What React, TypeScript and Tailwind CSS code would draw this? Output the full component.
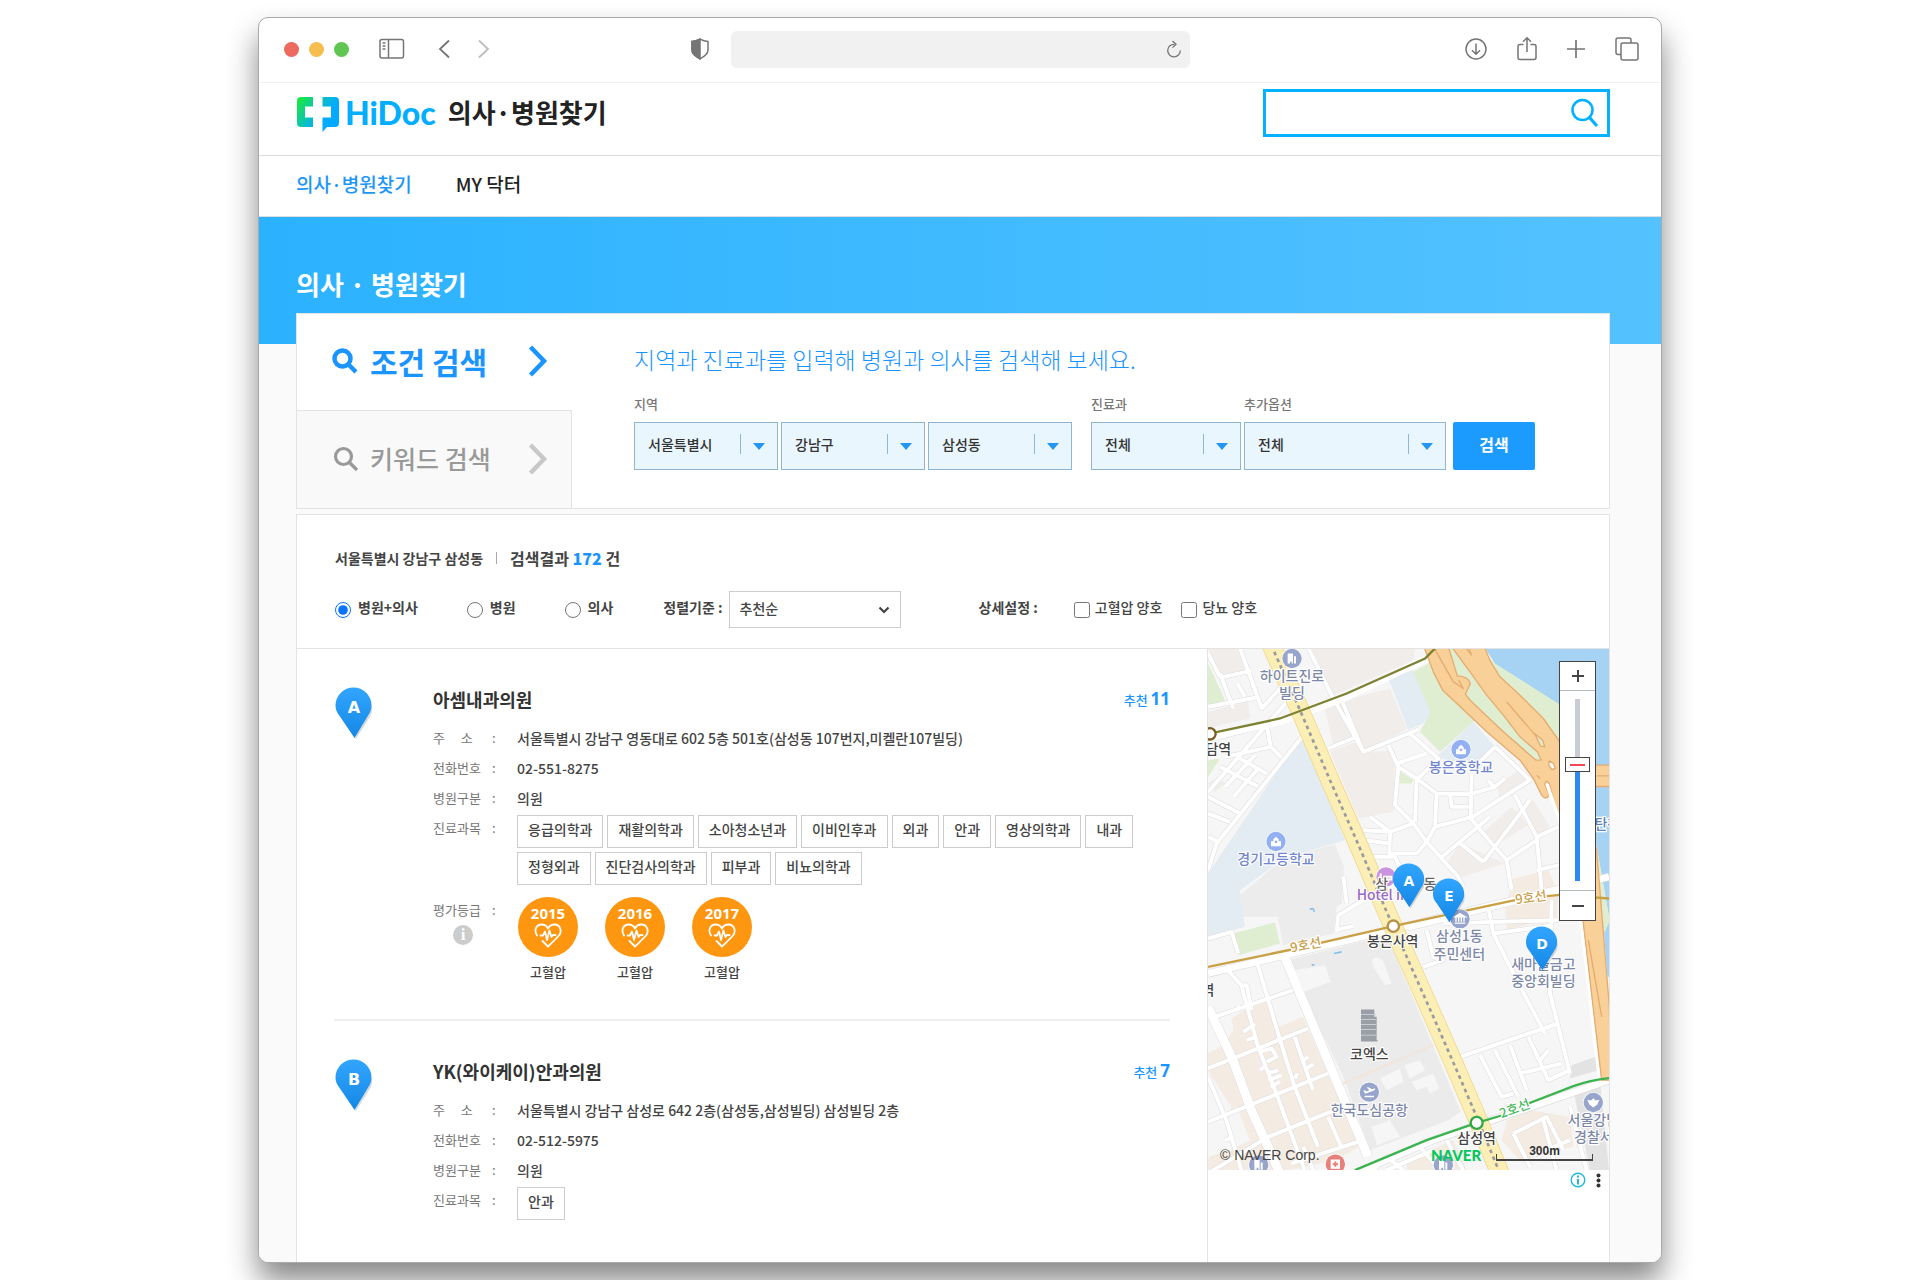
import type { ReactNode } from 'react';

type Hospital = {
  mark: string;
  name: string;
  likes: number;
  address: string;
  phone: string;
  kind: string;
  subjects: string[];
  grades: { year: string; label: string }[];
};

const hospitals: Hospital[] = [
  {
    mark: 'A',
    name: '아셈내과의원',
    likes: 11,
    address: '서울특별시 강남구 영동대로 602 5층 501호(삼성동 107번지,미켈란107빌딩)',
    phone: '02-551-8275',
    kind: '의원',
    subjects: [
      '응급의학과', '재활의학과', '소아청소년과', '이비인후과', '외과', '안과', '영상의학과', '내과',
      '정형외과', '진단검사의학과', '피부과', '비뇨의학과',
    ],
    grades: [
      { year: '2015', label: '고혈압' },
      { year: '2016', label: '고혈압' },
      { year: '2017', label: '고혈압' },
    ],
  },
  {
    mark: 'B',
    name: 'YK(와이케이)안과의원',
    likes: 7,
    address: '서울특별시 강남구 삼성로 642 2층(삼성동,삼성빌딩) 삼성빌딩 2층',
    phone: '02-512-5975',
    kind: '의원',
    subjects: ['안과'],
    grades: [],
  },
];

function Pin({ mark, className }: { mark: string; className: string }) {
  return (
    <svg viewBox="0 0 38 53" className={className}>
      <defs>
        <linearGradient id={`pin-${mark}`} x1="0" y1="0" x2="0" y2="1">
          <stop offset="0" stopColor="#31a5ff" />
          <stop offset="1" stopColor="#1488e4" />
        </linearGradient>
      </defs>
      <path d="M21 52 L36 28 A18 18 0 0 0 37 20 L33 12 L20 52Z" fill="#000" opacity=".15" />
      <path d="M18.500 .500 A18 18 0 0 1 36.500 18.500 C36.500 22.500 35 26 32.500 29.500 L19.500 51 L5 29.500 C2 26 .500 22.500 .500 18.500 A18 18 0 0 1 18.500 .500Z" fill={`url(#pin-${mark})`} />
      <text x="19" y="26" textAnchor="middle" fill="#fff" fontSize="16" fontWeight="700" fontFamily="DejaVu Sans, sans-serif">{mark}</text>
    </svg>
  );
}

function BrowserBar() {
  return (
    <div className="flex h-[65px] shrink-0 items-center border-b border-[#f2f2f2] pr-[21px] pb-[2px] pl-[25px] text-[#757575]">
      <div className="flex gap-[10px]">
        <span className="h-[15px] w-[15px] rounded-full bg-[#ed6a5e]" />
        <span className="h-[15px] w-[15px] rounded-full bg-[#f5bf4f]" />
        <span className="h-[15px] w-[15px] rounded-full bg-[#61c554]" />
      </div>
      <button aria-label="sidebar" className="ml-[30px]">
        <svg width="26" height="22" viewBox="0 0 26 22" fill="none" stroke="currentColor" strokeWidth="1.500">
          <rect x="1" y="1.500" width="23.500" height="18.500" rx="2" />
          <path d="M9.500 1.500v18.500M3.500 5h3M3.500 8h3M3.500 11h3" />
        </svg>
      </button>
      <button aria-label="back" className="ml-[33px]">
        <svg width="12" height="20" viewBox="0 0 12 20" fill="none" stroke="currentColor" strokeWidth="1.800">
          <path d="M11 1.500 L2 10 L11 18.500" />
        </svg>
      </button>
      <button aria-label="forward" className="ml-[28px] text-[#bdbdbd]">
        <svg width="12" height="20" viewBox="0 0 12 20" fill="none" stroke="currentColor" strokeWidth="1.800">
          <path d="M1 1.500 L10 10 L1 18.500" />
        </svg>
      </button>
      <div className="flex flex-1 items-center justify-center pl-[6px]">
        <svg width="18" height="22" viewBox="0 0 18 22" fill="none" stroke="currentColor" strokeWidth="1.500">
          <path d="M9 1.200 C6.500 2.500 4 3.300 1 3.500 V12 C1 16 4.500 18.500 9 20.800 C13.500 18.500 17 16 17 12 V3.500 C14 3.300 11.500 2.500 9 1.200Z" />
          <path d="M9 1.200 C6.500 2.500 4 3.300 1 3.500 V12 C1 16 4.500 18.500 9 20.800Z" fill="currentColor" />
        </svg>
        <div className="ml-[22px] flex h-[37px] w-[459px] items-center rounded-md bg-[#f1f1f1] pr-2">
          <input aria-label="address" className="h-full min-w-0 flex-1 bg-transparent px-3 outline-none" />
          <button aria-label="reload">
            <svg width="16" height="18" viewBox="0 0 16 18" fill="none" stroke="currentColor" strokeWidth="1.300">
              <path d="M8.500 4.300 A6.300 6.300 0 1 0 14.300 10.500" />
              <path d="M6.500 1 L10 4.300 L6.500 7.600" />
            </svg>
          </button>
        </div>
      </div>
      <div className="ml-[80px] flex items-center gap-[28px]">
        <button aria-label="downloads">
          <svg width="24" height="24" viewBox="0 0 24 24" fill="none" stroke="currentColor" strokeWidth="1.500">
            <circle cx="12" cy="12" r="10" />
            <path d="M12 6.500v10.500M8 13.200l4 4 4-4" />
          </svg>
        </button>
        <button aria-label="share">
          <svg width="22" height="26" viewBox="0 0 22 26" fill="none" stroke="currentColor" strokeWidth="1.500">
            <path d="M7.500 8.500H4a2 2 0 0 0-2 2v11a2 2 0 0 0 2 2h14a2 2 0 0 0 2-2v-11a2 2 0 0 0-2-2h-3.500M11 16V2M7 5.700l4-4 4 4" />
          </svg>
        </button>
        <button aria-label="new tab">
          <svg width="20" height="20" viewBox="0 0 20 20" stroke="currentColor" strokeWidth="1.700">
            <path d="M10 1v18M1 10h18" />
          </svg>
        </button>
        <button aria-label="tabs">
          <svg width="26" height="26" viewBox="0 0 26 26" fill="none" stroke="currentColor" strokeWidth="1.500">
            <path d="M7 18.500H4a2 2 0 0 1-2-2V4a2 2 0 0 1 2-2h11a2 2 0 0 1 2 2v3" />
            <rect x="7" y="7" width="17" height="17" rx="2" />
          </svg>
        </button>
      </div>
    </div>
  );
}

function SiteHeader() {
  return (
    <>
      <header className="flex h-[73px] shrink-0 items-start justify-between border-b border-[#dedede] pl-[37px] pr-[51px]">
        <a href="#" className="flex items-start pt-[8px]">
          <svg width="44" height="37" viewBox="0 0 44 37" className="mt-[5px]">
            <defs>
              <linearGradient id="logo" x1="0" y1="0" x2="1" y2=".6">
                <stop offset="0" stopColor="#1bee2c" />
                <stop offset=".55" stopColor="#08b9d6" />
                <stop offset=".8" stopColor="#00aaff" />
              </linearGradient>
            </defs>
            <path d="M5 1H17V10.500H9V21.500H17V31H5A4 4 0 0 1 1 27V5A4 4 0 0 1 5 1Z M26.500 1H39A4 4 0 0 1 43 5V27A4 4 0 0 1 39 31H31L26.500 36V21.500H35V10.500H26.500Z" fill="url(#logo)" />
          </svg>
          <span className="ml-[5px] font-['Lato',sans-serif] text-[32px] leading-[44px] font-black text-[#03aeff]">HiDoc</span>
          <span className="ml-[12px] text-[26px] leading-[42px] font-bold text-[#222]">의사·병원찾기</span>
        </a>
        <form className="mt-[6px] flex h-[48px] w-[347px] items-center border-3 border-[#03b1ff] pr-[8px]">
          <input aria-label="검색어" className="h-full min-w-0 flex-1 px-3 outline-none" />
          <button type="button" aria-label="검색">
            <svg width="30" height="30" viewBox="0 0 30 30" fill="none" stroke="#03b1ff" strokeWidth="2.600">
              <circle cx="13.500" cy="12" r="10" />
              <path d="M20.500 19.500 L28 28" strokeWidth="3.200" />
            </svg>
          </button>
        </form>
      </header>
      <nav className="flex h-[61px] shrink-0 items-center gap-[44px] border-b border-[#dedede] pb-[3px] pl-[37px] text-[19px] font-medium">
        <a href="#" className="text-[#2196f9]">의사·병원찾기</a>
        <a href="#" className="text-[#222]">MY 닥터</a>
      </nav>
    </>
  );
}

function SearchGlyph({ width }: { width: string }) {
  return (
    <svg width="26" height="26" viewBox="0 0 26 26" fill="none" stroke="currentColor" strokeWidth={width}>
      <circle cx="10.500" cy="10.500" r="8" />
      <path d="M16.500 16.500 L24 24" />
    </svg>
  );
}

function TabArrow() {
  return (
    <svg width="20" height="32" viewBox="0 0 20 32" fill="none" stroke="currentColor" strokeWidth="4.500" className="ml-auto">
      <path d="M2.500 2 L16 16 L2.500 30" />
    </svg>
  );
}

function BlueSelect({ id, value, className, label }: { id: string; value: string; className: string; label?: string }) {
  return (
    <div className={className}>
      <label htmlFor={id} className="mb-[10px] block h-4 text-[13px] leading-4 font-medium text-[#777]">{label}</label>
      <div className="relative h-12">
        <select id={id} className="h-12 w-full appearance-none border border-[#8fb5cf] bg-[#e9f6fe] pl-[13px] pb-[4px] text-[14px] font-medium text-[#333]">
          <option>{value}</option>
        </select>
        <span className="pointer-events-none absolute top-3 right-[37px] h-5 w-px bg-[#8fb8d8]" />
        <svg width="12" height="7" viewBox="0 0 12 7" className="pointer-events-none absolute top-[21px] right-[13px]">
          <path d="M0 0H12L6 7Z" fill="#2196f3" />
        </svg>
      </div>
    </div>
  );
}

function ConditionPanel() {
  return (
    <section className="flex border border-[#e3e3e3] bg-white">
      <div className="w-[275px] shrink-0">
        <button className="flex h-24 w-full items-center pr-[24px] pb-[2px] pl-[35px] text-[#1a95ff]">
          <SearchGlyph width="4.500" />
          <span className="ml-[12px] text-[30px] font-bold">조건 검색</span>
          <TabArrow />
        </button>
        <button className="flex h-[98px] w-full items-center border-t border-r border-[#e3e3e3] bg-[#f9f9f9] pr-[23px] pb-[2px] pl-[36px] text-[#999]">
          <SearchGlyph width="3.200" />
          <span className="ml-[11px] text-[25px] font-medium">키워드 검색</span>
          <span className="ml-auto text-[#c8c8c8]"><TabArrow /></span>
        </button>
      </div>
      <div className="min-w-0 flex-1 pt-[29px] pl-[62px]">
        <h2 className="mb-[21px] text-[23px] leading-8 font-light text-[#1a95ff]">지역과 진료과를 입력해 병원과 의사를 검색해 보세요.</h2>
        <div className="flex items-end gap-[3px]">
          <BlueSelect id="city" label="지역" value="서울특별시" className="w-36" />
          <BlueSelect id="district" value="강남구" className="w-36" />
          <BlueSelect id="town" value="삼성동" className="w-36" />
          <BlueSelect id="subject" label="진료과" value="전체" className="ml-[16px] w-[150px]" />
          <BlueSelect id="option" label="추가옵션" value="전체" className="w-[202px]" />
          <button className="ml-[4px] h-12 w-[82px] rounded-xs bg-[#1c9bff] pb-[4px] text-[16px] font-bold text-white">검색</button>
        </div>
      </div>
    </section>
  );
}

function Choice({ type, id, checked, children }: { type: 'radio' | 'checkbox'; id: string; checked?: boolean; children: ReactNode }) {
  return (
    <span className="flex items-center">
      <input type={type} id={id} name={type === 'radio' ? 'target' : id} defaultChecked={checked} className="h-4 w-4 accent-[#0a74ff]" />
      <label htmlFor={id} className={type === 'radio' ? 'pb-[4px] pl-[7px] font-bold' : 'pb-[4px] pl-[5px] font-medium'}>{children}</label>
    </span>
  );
}

function FilterBar() {
  return (
    <div className="border-b border-[#e3e3e3] pt-[29px] pb-[20px] pl-[38px] text-[14px] text-[#444]">
      <p className="flex h-7 items-center font-bold">
        서울특별시 강남구 삼성동
        <span className="mx-[13px] h-[12px] w-px bg-[#aaa]" />
        <span className="text-[16px]">검색결과 <b className="text-[#1a95ff]">172</b> 건</span>
      </p>
      <form className="mt-[19px] flex h-[37px] items-center">
        <Choice type="radio" id="both" checked>병원+의사</Choice>
        <span className="w-[49px]" />
        <Choice type="radio" id="clinic">병원</Choice>
        <span className="w-[49px]" />
        <Choice type="radio" id="doctor">의사</Choice>
        <label htmlFor="sort" className="ml-[50px] pb-[4px] font-bold">정렬기준 :</label>
        <div className="relative ml-[6px]">
          <select id="sort" className="h-[37px] w-[172px] appearance-none border border-[#ccc] bg-white pb-[2px] pl-[10px] font-medium">
            <option>추천순</option>
          </select>
          <svg width="12" height="8" viewBox="0 0 12 8" fill="none" stroke="#444" strokeWidth="2.200" className="pointer-events-none absolute top-[15px] right-[11px]">
            <path d="M1.500 1.500 L6 6 L10.500 1.500" />
          </svg>
        </div>
        <span className="ml-[78px] mr-[36px] pb-[4px] font-bold">상세설정 :</span>
        <Choice type="checkbox" id="pressure">고혈압 양호</Choice>
        <span className="w-[19px]" />
        <Choice type="checkbox" id="sugar">당뇨 양호</Choice>
      </form>
    </div>
  );
}

function Row({ name, children }: { name: string; children: ReactNode }) {
  return (
    <div className="flex items-start leading-[30px]">
      <dt className="flex w-[84px] shrink-0 text-[13px] text-[#777]">
        <span className="w-[59px] whitespace-pre">{name}</span>:
      </dt>
      <dd className="min-w-0 flex-1 text-[14px] font-medium text-[#444]">{children}</dd>
    </div>
  );
}

function HeartBeat() {
  return (
    <svg width="28" height="25" viewBox="0 0 28 25" fill="none" stroke="#fff" strokeWidth="1.800" strokeLinejoin="round" strokeLinecap="round">
      <path d="M3 12.500 C-.5 7 2.500 1.500 7.500 1.500 C10.500 1.500 12.800 3 14 5.500 C15.200 3 17.500 1.500 20.500 1.500 C26 1.500 28.500 8 25 12.500 C22 16 18 19.500 14 23.500 L8.500 18" />
      <path d="M6.500 12.500H9L11 8.500L13 17L15.500 7.500L17.500 14L19 12H21.500" />
    </svg>
  );
}

function HospitalItem({ item }: { item: Hospital }) {
  return (
    <article className="flex items-start border-b-2 border-[#eee] pt-[38px] pb-[37px] last:border-b-0">
      <div className="w-[99px] shrink-0 pl-px">
        <Pin mark={item.mark} className="h-[53px] w-[38px]" />
      </div>
      <div className="min-w-0 flex-1">
        <div className="mb-3 flex h-6 items-center justify-between">
          <h3 className="text-[18px] font-bold text-[#333]">{item.name}</h3>
          <p className="text-[13px] font-medium text-[#1a95ff]">
            추천 <b className="font-['Noto_Sans',sans-serif] text-[17px] leading-5">{item.likes}</b>
          </p>
        </div>
        <dl>
          <Row name={'주\u2003 소'}>{item.address}</Row>
          <Row name="전화번호">{item.phone}</Row>
          <Row name="병원구분">{item.kind}</Row>
          <Row name="진료과목">
            <ul className="flex flex-wrap gap-1 pt-[2px] pr-[30px]">
              {item.subjects.map((s) => (
                <li key={s} className="h-[33px] border border-[#ccc] px-[10px] leading-[27px]">{s}</li>
              ))}
            </ul>
          </Row>
          {item.grades.length > 0 && (
            <div className="flex pt-[10px]">
              <dt className="w-[84px] shrink-0 text-[13px] leading-[30px] text-[#777]">
                <span className="flex"><span className="w-[59px]">평가등급</span>:</span>
                <button aria-label="info" className="ml-[20px] block h-5 w-5 rounded-full bg-[#ccc] text-center font-['Liberation_Serif',serif] text-[17px] leading-5 font-bold text-white">i</button>
              </dt>
              <dd className="flex gap-[27px] pt-[2px] pl-px">
                {item.grades.map((g) => (
                  <div key={g.year} className="w-[60px] text-center">
                    <div className="flex h-[60px] flex-col items-center rounded-full bg-[#ff960f] pt-[6px]">
                      <span className="font-['Noto_Sans',sans-serif] text-[15px] leading-5 font-bold text-white">{g.year}</span>
                      <HeartBeat />
                    </div>
                    <p className="mt-[5px] text-[13px] leading-5 font-medium text-[#444]">{g.label}</p>
                  </div>
                ))}
              </dd>
            </div>
          )}
        </dl>
      </div>
    </article>
  );
}

// local streets, one path per neighbourhood
const streets = [
  'M24 200 L170 172 M60 100 L100 205 M70 110 L155 92 M120 24 L185 205 L240 145 M24 40 L60 110 M112 130 L135 170 M24 455 L300 140',
  'M24 300 L200 255 L290 225 M200 255 L212 320 L75 350 M212 320 L245 352 M325 24 L395 165 L490 335 L655 268 M385 325 L465 292 M425 180 L490 335',
  'M24 690 L50 610 L310 285 M24 520 L90 545 M60 380 L175 440 M110 350 L200 400 M24 470 L120 520 M100 470 L175 385 M75 440 L165 345 M24 590 L55 605',
  'M565 315 L595 380 L585 495 L640 550 L680 605 L775 710 L790 740 M595 380 L650 415 L710 460 L810 462 L885 440 L915 415 M590 370 L680 340 M630 280 L715 355 L655 415',
  'M650 415 L645 545 M710 460 L705 560 L680 605 M705 560 L810 532 L875 610 L920 660 L935 750 M750 460 L755 500 L812 500 M815 400 L812 530 M885 320 L990 420 L810 535',
  'M885 320 L820 385 M865 420 L885 445 M945 465 L1010 590 L1025 750 M1010 590 L1076 560 M775 605 L850 665 M720 655 L870 530 M850 665 L990 480 M920 660 L1010 600',
  'M510 530 L570 575 L635 552 M490 570 L570 575 L568 640 L650 640 L680 605 M495 600 L568 610 M520 650 L585 650 L640 770 M1010 690 L1078 675',
  'M410 875 L415 825 L490 780 M430 710 L440 790 M405 870 L460 858 M24 895 L95 875 L115 940 M625 865 L1075 755 M730 850 L1075 840 M865 800 L880 880 L1060 855',
  'M880 880 L940 1000 L1035 1180 M1055 780 L1050 1060 L1110 1300 M780 1250 L1075 1150 M840 1245 L905 1370 L940 1360 M885 1230 L955 1370 M930 1215 L980 1350 M985 1190 L1045 1320 L1110 1290',
  'M960 1300 L1085 1270 M1045 1230 L1020 1260 M680 870 L700 950 L730 960 L670 980',
  'M44 1130 L279 1050 M24 1285 L324 1165 M24 1445 L384 1300 M24 1600 L204 1490 L404 1410 M74 980 L124 1035 L174 1220 L229 1360 L314 1590',
  'M114 1095 L116 1110 M120 1035 H140 L155 1110 M169 960 L239 1195 L284 1340 L354 1520 M284 1190 L339 1350 M384 1430 L424 1520 M474 1505 L274 1570 M24 1310 L79 1440 L124 1590',
  'M130 1175 L165 1152 M140 1200 L168 1190 M180 1290 L200 1275 M310 1260 L325 1250 M320 1285 L340 1272 M285 1315 L292 1300',
  'M180 1235 L215 1225 L230 1250 L200 1265 M200 1300 L235 1290 M205 1320 L245 1305 M212 1340 L240 1325 M310 1520 L340 1590 M75 1500 L100 1490',
  'M940 1480 L1040 1430 L1090 1530 M940 1480 L990 1580 M1030 1440 L1070 1590 M1110 1400 L1160 1590 M560 1590 L700 1530 M740 1500 L790 1590 M1000 1545 L1110 1500 M520 1590 L560 1550 L610 1590 M660 1520 L720 1590',
];

const avenue = 'M214 15L300 210L390 420L480 625L560 815L620 950L700 1130L770 1290L830 1430L900 1600';

function MapIcon({ x, y, fill, children }: { x: number; y: number; fill: string; children: ReactNode }) {
  return (
    <g transform={`translate(${x} ${y})`}>
      <circle r="31" fill="#fff" />
      <circle r="29" fill={fill} />
      {children}
    </g>
  );
}

const school = <path d="M-15 14V-1H-8V-7L0 -14L8 -7V-1H15V14Z M0 -3A4 4 0 1 0 .1 -3Z" fill="#fff" fillRule="evenodd" />;
const office = <path d="M-13 15V-15H3V15H-1V9H-6V15Z M6 -7H12V15H6Z" fill="#fff" />;

function MapCanvas() {
  return (
    <svg viewBox="24 25 1203 1566" preserveAspectRatio="xMidYMid slice" className="absolute inset-0 h-full w-full font-['Noto_Sans_CJK_KR',sans-serif]">
      <rect x="24" y="25" width="1203" height="1566" fill="#f6f6f6" />
      {/* blocks */}
      <g fill="#f1edea">
        <path d="M24 24H115L135 95L65 110Z M24 215L145 185L150 235L60 255L24 265Z M335 24H645L640 60L400 165Z M375 210L420 180L465 290L400 315Z M430 180L570 145L622 268L490 330Z" />
        <path d="M390 335L480 300L510 335L585 330L580 515L475 535Z M890 430L960 390L985 425L900 485Z M840 585L935 500L985 555L885 615Z M970 500L1000 480L1050 560L1010 585Z M780 610L850 640L915 670L770 715L740 670Z M24 430L55 410L75 430L45 455Z" />
      </g>
      <path d="M940 715L1045 690L1075 760L1070 830L920 870L915 800Z M94 1135L144 1105L209 1080L239 1160L309 1130L479 1520L404 1560L224 1600H154L24 1590V1560L94 1400L24 1290V1240L70 1215L100 1170Z M920 1440L990 1410L1110 1430L1120 1520L960 1560L905 1500Z M620 1560L760 1500L800 1590H620Z" fill="#f4ebe2" />
      <path d="M24 1400L80 1440L110 1400L150 1500L90 1530L24 1550Z" fill="#f6f6f6" />
      <path d="M24 700L305 285L435 600L250 655L120 750L135 860L24 890Z M565 115L640 90L695 215L670 250L625 268Z M710 350L820 245L885 320L830 370L760 365Z" fill="#e3ebf3" />
      <path d="M120 765L250 655L405 612L432 680L425 790L410 800L400 880L250 915L232 830H130Z" fill="#ececec" />
      <path d="M262 960L560 885L782 1415L745 1440L510 1530L430 1310Z" fill="#ebebeb" />
      <path d="M1115 1275L1190 1248L1195 1290L1110 1315Z M1120 1350L1200 1320L1227 1590H1170Z" fill="#e3e3e3" />
      <path d="M24 70L75 180L24 195Z M640 95L720 50L770 160L825 240L720 335L660 275L692 215Z M600 395L640 420L635 430H600Z M24 360L60 355L24 410Z M100 880L225 847L240 910L115 945Z M860 50L1080 190V330L960 200Z" fill="#dfedd0" />
      <path d="M855 24H1227V830L1190 620L1078 300V192L885 70Z" fill="#a6d3f3" />
      <path d="M1190 620L1227 830V900L1200 860Z" fill="#dfedd0" />

      {/* grey rims first, white on top */}
      {streets.map((d) => <path key={d} d={d} fill="none" stroke="#dcdcdc" strokeWidth="15" strokeLinejoin="round" />)}
      <g fill="none" stroke="#dcdcdc" strokeWidth="30">
        <path d="M24 1100L99 1260L154 1410L209 1530L240 1600 M254 950L504 1550" />
        <path d="M24 1000L570 870L1227 710 M440 1610L700 1500L1227 1320" strokeWidth="24" />
      </g>
      {streets.map((d) => <path key={d} d={d} fill="none" stroke="#fff" strokeWidth="12" strokeLinejoin="round" />)}
      <g fill="none" stroke="#fff" strokeWidth="27">
        <path d="M24 1100L99 1260L154 1410L209 1530L240 1600 M254 950L504 1550" />
        <path d="M24 1000L570 870L1227 710 M440 1610L700 1500L1227 1320 M24 290L240 245L440 172L700 45" strokeWidth="20" />
      </g>
      <path d="M430 1330L700 1215" stroke="#f0e6dd" strokeWidth="8" />
      <path d="M285 990L375 975L392 1025L310 1055Z M515 960Q530 940 550 965L575 1030L555 1035L520 980Z M540 1315L600 1285L610 1325L560 1350Z M612 1275L660 1260L675 1290L630 1315Z M635 1325L700 1300L718 1345L690 1360L680 1340L650 1350Z M515 1460L570 1440L600 1490L530 1515Z" fill="#f6f6f6" />

      {/* riverside highways */}
      <g stroke="#e5ac70" strokeWidth="4" strokeLinejoin="round">
        <path d="M1120 375H1230V439H1120Z" fill="#f8d098" />
        <path d="M672 20L700 95L728 150L765 185L860 275L960 360L1000 415L1025 465Q1037 482 1048 465L1034 432Q1040 416 1048 432L1078 540L1120 640L1150 850L1205 1320H1232V1290L1228 1100L1190 630L1100 330L1078 303L1030 235L960 165L900 110L872 65L853 20Z" fill="#f8d098" />
        <path d="M745 20L772 107Q805 108 811 130L796 162L815 185L910 275L1008 360L1024 360L1012 335L960 290L910 225L860 165L810 95L755 20Z" fill="#dfedd0" />
        <path d="M795 20L815 45L805 20Z" fill="#dfedd0" />
        <path d="M1004 280L1022 318L1034 320L1028 300Z" fill="#dfedd0" />
        <path d="M1048 362L1060 370L1066 385L1056 388L1046 375Z" fill="#fff" />
        <path d="M1190 407H1228 M706 30L760 125L790 145L776 120 M920 185L980 255L1010 290 M1010 405L1020 415 M1165 900L1205 1130" fill="none" />
      </g>
      <path d="M1042 435L1080 545" stroke="#fff" strokeWidth="10" strokeLinecap="round" />
      <path d="M1142 840L1197 1315" stroke="#fff" strokeWidth="8" />
      <path d="M1212 880L1222 1010L1230 1010V840Z" fill="#a6d3f3" />

      {/* main avenue */}
      <g fill="none">
        <path d={avenue} stroke="#efd88c" strokeWidth="58" />
        <path d={avenue} stroke="#fcefb6" strokeWidth="53" />
        <path d={avenue} stroke="#9a9a9f" strokeWidth="8" strokeDasharray="11 11" />
      </g>

      {/* subway lines */}
      <g fill="none" strokeWidth="7">
        <path d="M24 281L240 235L440 160L675 55L710 20" stroke="#7d8232" />
        <path d="M24 980L275 928 M362 908L580 858L945 780 M1040 768L1080 764L1227 775" stroke="#c9a043" />
        <path d="M465 1590L680 1500L830 1448L905 1426 M985 1390L1120 1338Q1170 1320 1227 1314" stroke="#3bb34f" />
        <circle cx="30" cy="281" r="17" fill="#fff" stroke="#7a5f25" />
        <circle cx="580" cy="858" r="17" fill="#fff" stroke="#b5924a" />
        <circle cx="830" cy="1448" r="18" fill="#fff" stroke="#35a84a" />
      </g>
      <path d="M330 808Q340 800 343 815 M402 940L425 935 M335 974H343" stroke="#84c0ec" strokeWidth="5" fill="none" />
      <path d="M483 1108H523V1130H530V1200H533V1204H483Z" fill="#9a9ea6" />
      <path d="M483 1123H528M483 1138H528M483 1153H528M483 1168H528M483 1185H532" stroke="#c9ccd1" strokeWidth="3" />

      {/* places */}
      <MapIcon x={276} y={55} fill="#97a4cb">{office}</MapIcon>
      <MapIcon x={783} y={328} fill="#93b0f2">{school}</MapIcon>
      <MapIcon x={228} y={604} fill="#93b0f2">{school}</MapIcon>
      <MapIcon x={558} y={710} fill="#ca93dd"><path d="M-16 -10V14M-16 8H16V0H-8" stroke="#fff" strokeWidth="6" fill="none" /></MapIcon>
      <MapIcon x={780} y={836} fill="#97a4cb"><path d="M-16 13H16M-12 -4V9M-4 -4V9M4 -4V9M12 -4V9M-16 -6L0 -15L16 -6Z" stroke="#fff" strokeWidth="4" fill="#fff" /></MapIcon>
      <MapIcon x={508} y={1356} fill="#97a4cb"><path d="M-18 -4L-13 -6L-8 -2L0 -6L-8 -14L-3 -15L9 -9L17 -12Q20 -8 14 -5L-12 5ZM-14 11H14V15H-14Z" fill="#fff" /></MapIcon>
      <MapIcon x={1180} y={1387} fill="#97a4cb"><path d="M-18 -8L-7 -6L0 -13L7 -6L18 -8L12 6L0 15L-12 6Z" fill="#fff" /></MapIcon>
      <MapIcon x={176} y={1574} fill="#97a4cb">{office}</MapIcon>
      <MapIcon x={730} y={1574} fill="#97a4cb">{office}</MapIcon>
      <MapIcon x={406} y={1572} fill="#e77f7a"><path d="M-14 -14H14V14H-14Z" fill="#fff" /><path d="M0 -8V8M-8 0H8" stroke="#e77f7a" strokeWidth="6" /></MapIcon>

      <g fontSize="42" fontWeight="500" textAnchor="middle" stroke="#fff" strokeWidth="7" strokeLinejoin="round" paintOrder="stroke" fill="#7d88a8">
        <text x="276" y="122">하이트진로</text>
        <text x="276" y="174">빌딩</text>
        <text x="783" y="396" fill="#7186cc">봉은중학교</text>
        <text x="228" y="673" fill="#7186cc">경기고등학교</text>
        <text x="545" y="746" fill="#666">삼</text>
        <text x="690" y="746" fill="#666">동</text>
        <text x="548" y="780" fill="#9a6bc2">Hotel in</text>
        <text x="55" y="341" fill="#444">담역</text>
        <text x="24" y="1064" fill="#444">역</text>
        <text x="578" y="919" fill="#444">봉은사역</text>
        <text x="778" y="904">삼성1동</text>
        <text x="778" y="956">주민센터</text>
        <text x="1030" y="988">새마을금고</text>
        <text x="1030" y="1039">중앙회빌딩</text>
        <text x="508" y="1256" fill="#444">코엑스</text>
        <text x="508" y="1426">한국도심공항</text>
        <text x="830" y="1510" fill="#444">삼성역</text>
        <text x="1180" y="1454">서울강남</text>
        <text x="1180" y="1507">경찰서</text>
        <text x="1222" y="566" fill="#5b83b4">탄천</text>
        <text x="318" y="928" fontSize="39" fill="#c9a04a" transform="rotate(-11 318 917)">9호선</text>
        <text x="993" y="786" fontSize="39" fill="#c9a04a" transform="rotate(-8 993 775)">9호선</text>
        <text x="945" y="1419" fontSize="39" fill="#4bb85c" transform="rotate(-20 945 1408)">2호선</text>
      </g>
    </svg>
  );
}

function MapPanel() {
  return (
    <aside className="w-[402px] shrink-0 border-l border-[#e3e3e3]">
      <div className="relative h-[521px] overflow-hidden">
        <MapCanvas />
        <Pin mark="A" className="absolute top-[214px] left-[184px] h-[46px] w-[34px]" />
        <Pin mark="E" className="absolute top-[229px] left-[224px] h-[46px] w-[34px]" />
        <Pin mark="D" className="absolute top-[277px] left-[317px] h-[46px] w-[34px]" />

        {/* zoom control */}
        <div className="absolute top-[12px] right-[13px] flex h-[260px] w-[37px] flex-col items-center border border-[#444] bg-white">
          <button aria-label="확대" className="flex h-[29px] w-full shrink-0 items-center justify-center border-b border-[#b5bcc2]">
            <svg width="12" height="12" viewBox="0 0 12 12" stroke="#444" strokeWidth="2"><path d="M6 0V12M0 6H12" /></svg>
          </button>
          <input
            type="range"
            aria-label="지도 확대 수준"
            defaultValue={65}
            className="mt-[8px] mb-[9px] h-[182px] w-[25px] shrink-0 appearance-none bg-[linear-gradient(to_top,#2f88f0_63%,#c9ccd3_63%)] bg-[length:5px_100%] bg-center bg-no-repeat [direction:rtl] [writing-mode:vertical-lr] [&::-webkit-slider-thumb]:h-[15px] [&::-webkit-slider-thumb]:w-[25px] [&::-webkit-slider-thumb]:appearance-none [&::-webkit-slider-thumb]:border [&::-webkit-slider-thumb]:border-[#444] [&::-webkit-slider-thumb]:bg-white [&::-webkit-slider-thumb]:bg-[linear-gradient(#f04a50,#f04a50)] [&::-webkit-slider-thumb]:bg-[length:15px_2px] [&::-webkit-slider-thumb]:bg-center [&::-webkit-slider-thumb]:bg-no-repeat"
          />
          <button aria-label="축소" className="flex w-full flex-1 items-center justify-center border-t border-[#b5bcc2]">
            <svg width="12" height="12" viewBox="0 0 12 12" stroke="#444" strokeWidth="2"><path d="M0 6H12" /></svg>
          </button>
        </div>

        <span className="absolute bottom-[5px] left-[12px] font-['Liberation_Sans',sans-serif] text-[14px] leading-5 text-[#444]">© NAVER Corp.</span>
        <span className="absolute bottom-[5px] left-[223px] font-['Lato',sans-serif] text-[15px] leading-5 font-black text-[#03c75a]">NAVER</span>
        <span className="absolute right-[16px] bottom-[9px] h-[17px] w-[97px] text-center font-['Liberation_Sans',sans-serif] text-[12px] leading-[14px] font-bold text-[#333]">
          300m
          <span className="absolute inset-x-0 bottom-0 h-[7px] border-x border-b-2 border-[#444]" />
        </span>
      </div>
      <div className="flex h-[20px] items-center justify-end gap-[10px] pr-[8px]">
        <svg width="16" height="16" viewBox="0 0 16 16" fill="none" stroke="#22b8d8">
          <circle cx="8" cy="8" r="6.800" strokeWidth="1.400" />
          <path d="M8 7V12.500M8 3.500V5.500" strokeWidth="2" />
        </svg>
        <svg width="5" height="15" viewBox="0 0 5 15" fill="#333">
          <circle cx="2.500" cy="2.500" r="2" />
          <circle cx="2.500" cy="7.500" r="2" />
          <circle cx="2.500" cy="12.500" r="2" />
        </svg>
      </div>
    </aside>
  );
}

export default function App() {
  return (
    <main className="flex h-screen justify-center overflow-hidden bg-white py-[17px] font-['Noto_Sans_CJK_KR',sans-serif]">
      <div className="flex w-full max-w-[1404px] flex-col overflow-hidden rounded-[10px] border border-[#aaa] bg-white shadow-[0_18px_30px_rgba(0,0,0,0.47)]">
        <BrowserBar />
        <SiteHeader />
        <div className="flex min-h-0 flex-1 flex-col bg-[#fafafa] bg-[linear-gradient(90deg,#2bb2ff,#54c2ff)] bg-[length:100%_127px] bg-no-repeat">
          <h1 className="px-[37px] pt-[47px] pb-[9px] text-[26px] leading-10 font-bold text-white">의사 · 병원찾기</h1>
          <div className="flex min-h-0 flex-1 flex-col pr-[51px] pl-[37px]">
            <ConditionPanel />
            <section className="mt-[5px] flex min-h-0 flex-1 flex-col border border-b-0 border-[#e3e3e3] bg-white">
              <FilterBar />
              <div className="flex min-h-0 flex-1">
                <div className="min-w-0 flex-1 px-[37px]">
                  {hospitals.map((h) => <HospitalItem key={h.mark} item={h} />)}
                </div>
                <MapPanel />
              </div>
            </section>
          </div>
        </div>
      </div>
    </main>
  );
}
